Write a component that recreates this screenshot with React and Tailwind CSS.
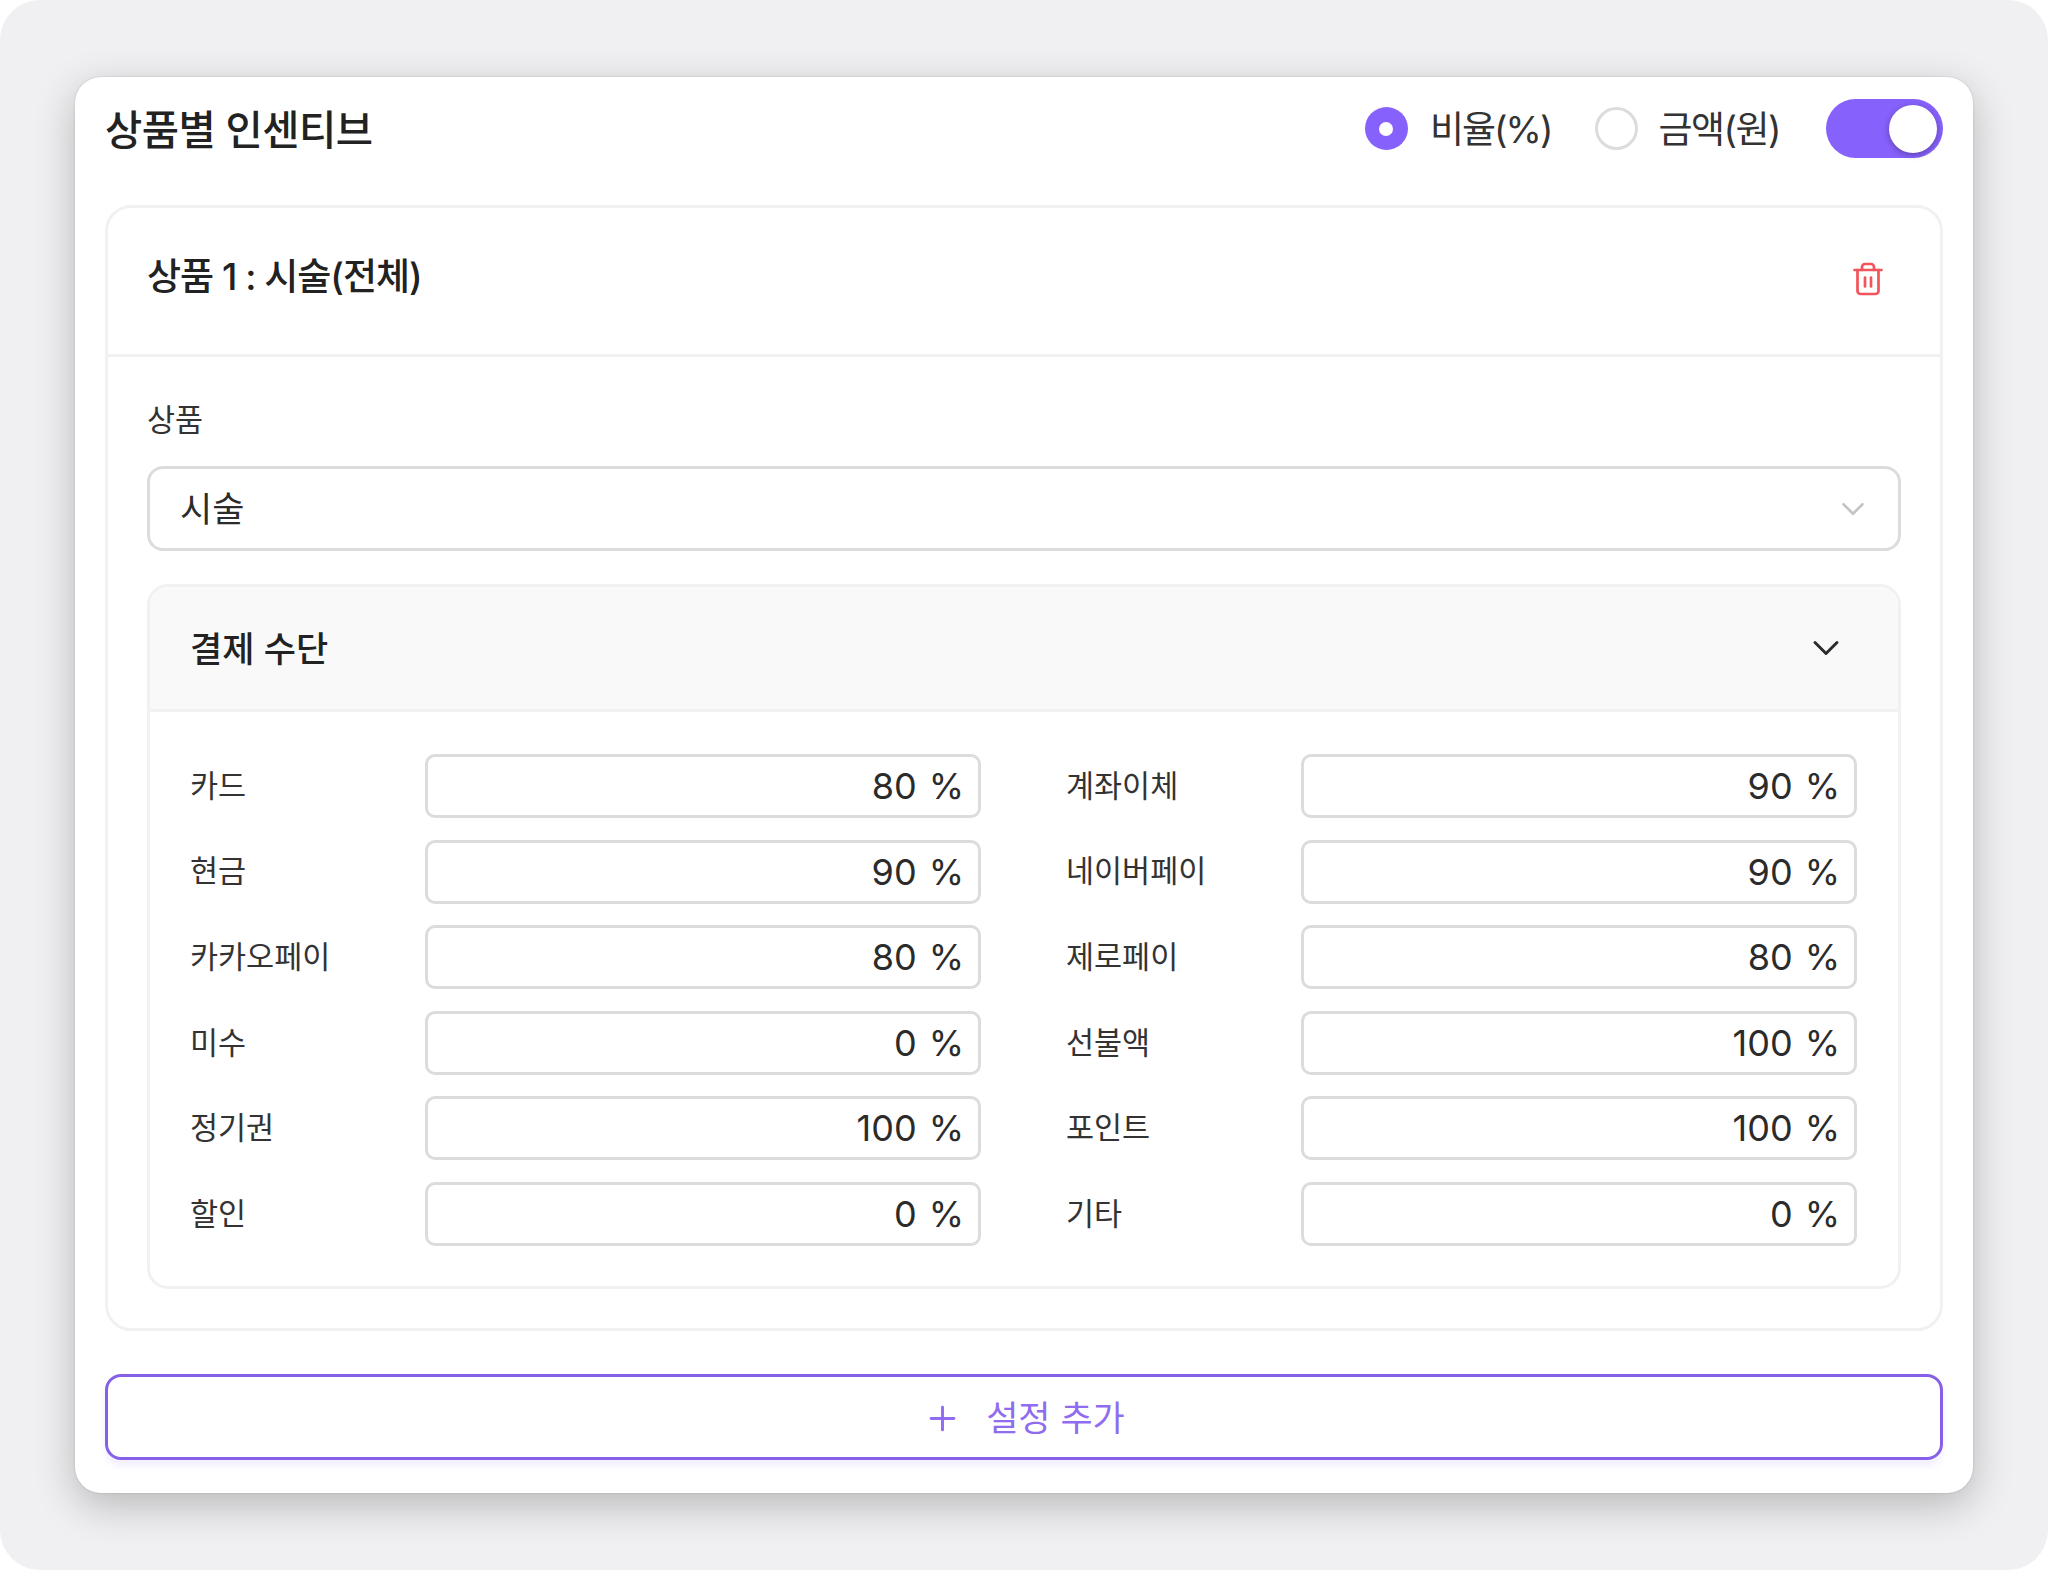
import React from "react";
import { ChevronDown, Plus, Trash2 } from "lucide-react";

const rows = [
  ["카드", "80", "계좌이체", "90"],
  ["현금", "90", "네이버페이", "90"],
  ["카카오페이", "80", "제로페이", "80"],
  ["미수", "0", "선불액", "100"],
  ["정기권", "100", "포인트", "100"],
  ["할인", "0", "기타", "0"],
];

const Field = ({ label, value }) => (
  <div className="flex items-center">
    <span className="w-[235px] shrink-0 text-[30.5px] leading-none text-[#333333]">{label}</span>
    <div className="flex h-[64px] w-[556px] items-center justify-end rounded-[10px] border-[3px] border-[#dcdcdc] pr-[14px] text-[36px] text-[#2b2b2b]">
      <span>{value}</span>
      <span className="ml-[12px]">%</span>
    </div>
  </div>
);

const App = () => {
  return (
    <div className="h-[1570px] w-[2048px] overflow-hidden bg-white font-['Inter','Noto_Sans_CJK_KR',sans-serif]">
      <div className="h-full rounded-[40px] bg-[#f0f0f2] px-[75px] pt-[77px]">
        <div className="h-[1416px] rounded-[26px] bg-white px-[30px] shadow-[0_0_2px_rgba(0,0,0,0.18),0_12px_40px_rgba(0,0,0,0.24)]">
          <div className="mb-[25px] flex h-[103px] items-center justify-between">
            <h1 className="pt-[5px] text-[40.5px] font-medium tracking-[-0.5px] text-[#222222]">상품별 인센티브</h1>
            <div className="flex items-center">
              <span className="flex h-[43px] w-[43px] items-center justify-center rounded-full bg-[#8661fb]">
                <span className="h-[14px] w-[14px] rounded-full bg-white"></span>
              </span>
              <span className="ml-[22px] pt-[2px] text-[37px] tracking-[-2px] text-[#333333]">비율(%)</span>
              <span className="ml-[44px] h-[43px] w-[43px] rounded-full border-[3px] border-[#dcdcdc]"></span>
              <span className="ml-[20px] pt-[2px] text-[37px] tracking-[-1.5px] text-[#333333]">금액(원)</span>
              <div className="ml-[46px] flex h-[59px] w-[117px] items-center justify-end rounded-full bg-[#8661fb] pr-[6px]">
                <span className="h-[48px] w-[48px] rounded-full bg-white shadow-[0_2px_6px_rgba(0,0,0,0.3)]"></span>
              </div>
            </div>
          </div>

          <div className="h-[1126px] rounded-[26px] border-[3px] border-[#f1f1f2]">
            <div className="flex h-[149px] items-center justify-between border-b-[3px] border-[#f1f1f2] pb-[5px] pl-[39px] pr-[54px]">
              <h2 className="pb-[3px] text-[37px] font-medium tracking-[-1px] text-[#222222]">상품 1 : 시술(전체)</h2>
              <Trash2 className="h-[36px] w-[36px] text-[#f2545b]" strokeWidth={1.8} />
            </div>

            <div className="px-[39px]">
              <div className="mt-[43px] text-[30.5px] leading-[40px] text-[#333333]">상품</div>
              <div className="mt-[26px] flex h-[85px] items-center justify-between rounded-[16px] border-[3px] border-[#dcdcdc] pl-[30px] pr-[26px]">
                <span className="pt-[2px] text-[35px] text-[#2b2b2b]">시술</span>
                <ChevronDown className="h-[38px] w-[38px] text-[#c4c4c4]" strokeWidth={1.6} />
              </div>

              <div className="mt-[33px] h-[705px] rounded-[21px] border-[3px] border-[#f1f1f2]">
                <div className="flex h-[125px] items-center justify-between rounded-t-[18px] border-b-[3px] border-[#f1f1f2] bg-[#f9f9f9] pl-[40px] pr-[50px]">
                  <h3 className="pt-[2px] text-[35px] font-medium text-[#222222]">결제 수단</h3>
                  <ChevronDown className="h-[44px] w-[44px] text-[#2b2b2b]" strokeWidth={1.6} />
                </div>
                <div className="grid grid-cols-2 gap-x-[84px] gap-y-[21.6px] px-[40px] pt-[42px]">
                  {rows.map((r) => (
                    <React.Fragment key={r[0]}>
                      <Field label={r[0]} value={r[1]} />
                      <Field label={r[2]} value={r[3]} />
                    </React.Fragment>
                  ))}
                </div>
              </div>
            </div>
          </div>

          <button className="mt-[43px] flex h-[86px] w-full items-center justify-center rounded-[16px] border-[3px] border-[#8661e8] bg-white pt-[2px] text-[35px] text-[#8f6cf0] shadow-[0_6px_6px_rgba(134,97,251,0.1)]">
            <Plus className="mr-[24px] h-[39px] w-[39px]" strokeWidth={1.8} />
            설정 추가
          </button>
        </div>
      </div>
    </div>
  );
};

export default App;
